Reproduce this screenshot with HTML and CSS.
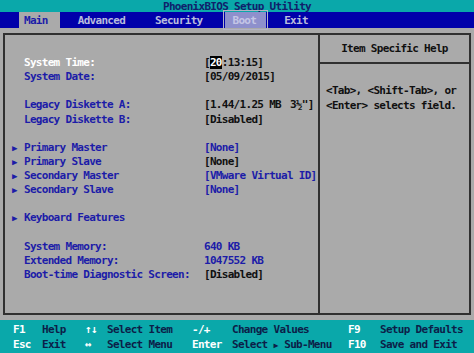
FILE: index.html
```html
<!DOCTYPE html>
<html>
<head>
  <title>PhoenixBIOS Setup Utility</title>
  <link rel="stylesheet" href="styles.css">
</head>

<body>
  <div class="title-bar">PhoenixBIOS Setup Utility</div>
  <ul class="menu-bar">
    <li class="menu-item selected">Main</li>
    <li class="menu-item">Advanced</li>
    <li class="menu-item">Security</li>
    <li class="menu-item focus">Boot</li>
    <li class="menu-item">Exit</li>
  </ul>

  <div class="screen">
    <div class="frame">
      <div class="settings">
        <div class="row"><span></span><span class="label current">System Time:</span><span class="value">[<span class="cursor">20</span>:13:15]</span></div>
        <div class="row"><span></span><span class="label">System Date:</span><span class="value">[05/09/2015]</span></div>
        <div class="row gap"></div>
        <div class="row"><span></span><span class="label">Legacy Diskette A:</span><span class="value">[1.44/1.25 MB <span class="inch">3½"</span>]</span></div>
        <div class="row"><span></span><span class="label">Legacy Diskette B:</span><span class="value">[Disabled]</span></div>
        <div class="row gap"></div>
        <div class="row"><span class="arrow">▶</span><span class="label">Primary Master</span><span class="value info">[None]</span></div>
        <div class="row"><span class="arrow">▶</span><span class="label">Primary Slave</span><span class="value">[None]</span></div>
        <div class="row"><span class="arrow">▶</span><span class="label">Secondary Master</span><span class="value info">[VMware Virtual ID]</span></div>
        <div class="row"><span class="arrow">▶</span><span class="label">Secondary Slave</span><span class="value info">[None]</span></div>
        <div class="row gap"></div>
        <div class="row"><span class="arrow">▶</span><span class="label">Keyboard Features</span><span></span></div>
        <div class="row gap"></div>
        <div class="row"><span></span><span class="label">System Memory:</span><span class="value info">640 KB</span></div>
        <div class="row"><span></span><span class="label">Extended Memory:</span><span class="value info">1047552 KB</span></div>
        <div class="row"><span></span><span class="label">Boot-time Diagnostic Screen:</span><span class="value">[Disabled]</span></div>
      </div>
      <div class="help">
        <div class="help-title">Item Specific Help</div>
        <div class="help-text">&lt;Tab&gt;, &lt;Shift-Tab&gt;, or<br>&lt;Enter&gt; selects field.</div>
      </div>
    </div>
  </div>

  <div class="keys">
    <span class="key">F1</span><span class="desc">Help</span>
    <span class="key">↑↓</span><span class="desc">Select Item</span>
    <span class="key">-/+</span><span class="desc">Change Values</span>
    <span class="key">F9</span><span class="desc">Setup Defaults</span>
    <span class="key">Esc</span><span class="desc">Exit</span>
    <span class="key">↔</span><span class="desc">Select Menu</span>
    <span class="key">Enter</span><span class="desc">Select <span class="small-arrow">▶</span> Sub-Menu</span>
    <span class="key">F10</span><span class="desc">Save and Exit</span>
  </div>
</body>
</html>
```

FILE: styles.css
```css
body {
  margin: 0;
  width: 474px;
  height: 353px;
  overflow: hidden;
  background: #aaaaaa;
  font-family: "DejaVu Sans Mono", "Liberation Mono", monospace;
  font-weight: bold;
  font-size: 11px;
  letter-spacing: -0.7px;
  display: flex;
  flex-direction: column;
}

.title-bar {
  height: 12px;
  line-height: 13px;
  background: #0aa8aa;
  color: #10206a;
  text-align: center;
}

.menu-bar {
  list-style: none;
  margin: 0;
  padding: 0 0 0 19px;
  height: 16px;
  background: #0000aa;
  display: flex;
  gap: 13px;
}

.menu-item {
  line-height: 17px;
  padding: 0 12px 0 5px;
  color: #b8bcdc;
}

.menu-item.selected {
  background: #aaaaaa;
  color: #1c1ca8;
}

.menu-item.focus {
  padding: 0 10px 0 7px;
  margin-left: -2px;
  background: #8e90cc;
  color: #c4c6e6;
  outline: 1px solid #b4b4c4;
  outline-offset: 1px;
}

.screen {
  flex: 1;
  padding: 5px 3px 5px 3px;
  display: flex;
}

.frame {
  flex: 1;
  border: 2px solid #303030;
  display: flex;
}

.settings {
  width: 313px;
  border-right: 2px solid #303030;
  padding-top: 21px;
}

.row {
  display: grid;
  grid-template-columns: 19px 180px auto;
  height: 14.13px;
  line-height: 14px;
  white-space: pre;
}

.arrow {
  padding-left: 7px;
  color: #1c1ca8;
  font-size: 9px;
  letter-spacing: 0;
}

.label {
  color: #1c1ca8;
}

.label.current {
  color: #ffffff;
}

.value {
  color: #101010;
}

.value.info {
  color: #1c1ca8;
}

.cursor {
  background: #000000;
  color: #ffffff;
}

.inch {
  margin-left: 3px;
}

.help {
  flex: 1;
  display: flex;
  flex-direction: column;
}

.help-title {
  height: 27px;
  line-height: 28px;
  text-align: center;
  color: #101010;
  border-bottom: 2px solid #303030;
}

.help-text {
  padding: 20px 0 0 6px;
  line-height: 14.5px;
  color: #101010;
}

.keys {
  height: 33px;
  background: #0aa8aa;
  box-sizing: border-box;
  padding: 2px 0 0 13px;
  display: grid;
  grid-template-columns: 29px 43px 22px 85px 40px 116px 32px auto;
  grid-auto-rows: 15px;
  line-height: 15px;
  white-space: pre;
}

.key {
  color: #ffffff;
}

.desc {
  color: #0c1e48;
}

.small-arrow {
  font-size: 8px;
  letter-spacing: 0;
}
```
